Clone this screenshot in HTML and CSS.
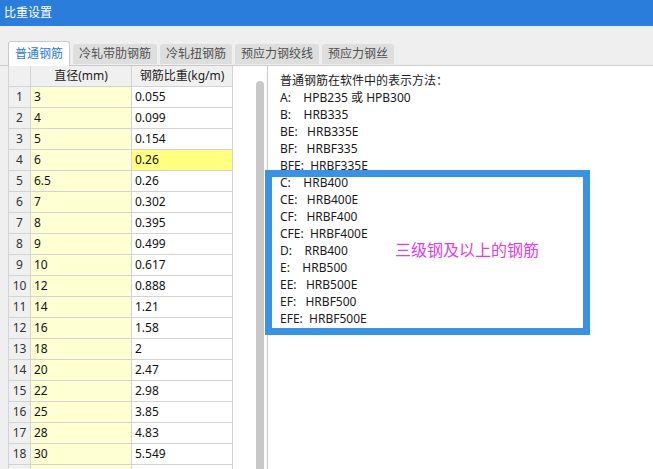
FILE: index.html
```html
<!DOCTYPE html>
<html lang="zh-CN">
<head>
<meta charset="utf-8">
<title>比重设置</title>
<link rel="stylesheet" href="styles.css">
</head>
<body>
<div class="window">
  <div class="titlebar">比重设置</div>
  <div class="tabbar">
    <div class="tab active">普通钢筋</div>
    <div class="tab">冷轧带肋钢筋</div>
    <div class="tab">冷轧扭钢筋</div>
    <div class="tab">预应力钢绞线</div>
    <div class="tab">预应力钢丝</div>
  </div>
  <div class="panel">
    <div class="left">
      <div class="grid">
        <div class="row head"><div class="c0"></div><div class="c1">直径(mm)</div><div class="c2">钢筋比重(kg/m)</div></div>
        <div class="row"><div class="c0">1</div><div class="c1">3</div><div class="c2">0.055</div></div>
        <div class="row"><div class="c0">2</div><div class="c1">4</div><div class="c2">0.099</div></div>
        <div class="row"><div class="c0">3</div><div class="c1">5</div><div class="c2">0.154</div></div>
        <div class="row"><div class="c0">4</div><div class="c1">6</div><div class="c2 sel">0.26</div></div>
        <div class="row"><div class="c0">5</div><div class="c1">6.5</div><div class="c2">0.26</div></div>
        <div class="row"><div class="c0">6</div><div class="c1">7</div><div class="c2">0.302</div></div>
        <div class="row"><div class="c0">7</div><div class="c1">8</div><div class="c2">0.395</div></div>
        <div class="row"><div class="c0">8</div><div class="c1">9</div><div class="c2">0.499</div></div>
        <div class="row"><div class="c0">9</div><div class="c1">10</div><div class="c2">0.617</div></div>
        <div class="row"><div class="c0">10</div><div class="c1">12</div><div class="c2">0.888</div></div>
        <div class="row"><div class="c0">11</div><div class="c1">14</div><div class="c2">1.21</div></div>
        <div class="row"><div class="c0">12</div><div class="c1">16</div><div class="c2">1.58</div></div>
        <div class="row"><div class="c0">13</div><div class="c1">18</div><div class="c2">2</div></div>
        <div class="row"><div class="c0">14</div><div class="c1">20</div><div class="c2">2.47</div></div>
        <div class="row"><div class="c0">15</div><div class="c1">22</div><div class="c2">2.98</div></div>
        <div class="row"><div class="c0">16</div><div class="c1">25</div><div class="c2">3.85</div></div>
        <div class="row"><div class="c0">17</div><div class="c1">28</div><div class="c2">4.83</div></div>
        <div class="row"><div class="c0">18</div><div class="c1">30</div><div class="c2">5.549</div></div>
        <div class="row"><div class="c0"></div><div class="c1"></div><div class="c2"></div></div>
      </div>
      <div class="scrollbar"></div>
    </div>
    <div class="right">
      <div class="line">普通钢筋在软件中的表示方法：</div>
      <div class="line">A:    HPB235 或 HPB300</div>
      <div class="line">B:    HRB335</div>
      <div class="line">BE:   HRB335E</div>
      <div class="line">BF:   HRBF335</div>
      <div class="line">BFE:  HRBF335E</div>
      <div class="line">C:    HRB400</div>
      <div class="line">CE:   HRB400E</div>
      <div class="line">CF:   HRBF400</div>
      <div class="line">CFE:  HRBF400E</div>
      <div class="line">D:    RRB400</div>
      <div class="line">E:    HRB500</div>
      <div class="line">EE:   HRB500E</div>
      <div class="line">EF:   HRBF500</div>
      <div class="line">EFE:  HRBF500E</div>
    </div>
  </div>
  <div class="annot">
    <div class="annot-text">三级钢及以上的钢筋</div>
  </div>
</div>
</body>
</html>
```
FILE: styles.css
```css
html, body {
  margin: 0;
  padding: 0;
  width: 653px;
  height: 469px;
  overflow: hidden;
}
body {
  background: #efefef;
  font-family: "Noto Sans", "Noto Sans CJK SC", sans-serif;
  font-size: 12px;
  color: #1a1a1a;
}
.window {
  position: relative;
  width: 653px;
  height: 469px;
  display: flex;
  flex-direction: column;
  overflow: hidden;
}
.titlebar {
  height: 26px;
  line-height: 26px;
  background: #2b7ddb;
  color: #ffffff;
  padding-left: 4px;
  font-size: 12px;
  flex: none;
}
.tabbar {
  flex: none;
  height: 39px;
  border-bottom: 1px solid #c9c9c9;
  display: flex;
  align-items: flex-end;
  gap: 3px;
  padding-left: 8px;
}
.tab {
  height: 20px;
  line-height: 20px;
  padding: 0 6px;
  background: #dedede;
  color: #505050;
  border-radius: 3px 3px 0 0;
  margin-bottom: 1px;
  white-space: nowrap;
}
.tab.active {
  height: 24px;
  line-height: 24px;
  background: #ffffff;
  color: #2b7ad8;
  border: 1px solid #c9c9c9;
  border-bottom: none;
  margin-bottom: -1px;
  padding: 0 6px;
}
.panel {
  flex: 1;
  margin-left: 8px;
  display: flex;
  background: #ffffff;
  min-height: 0;
  overflow: hidden;
}
.left {
  width: 259px;
  flex: none;
  display: flex;
  border-right: 1px solid #c8c8c8;
}
.grid {
  width: 225px;
  border-left: 1px solid #d3d3d3;
  align-self: flex-start;
}
.row {
  display: grid;
  grid-template-columns: 22px 101px 101px;
  height: 21px;
}
.row > div {
  border-right: 1px solid #d3d3d3;
  border-bottom: 1px solid #d3d3d3;
  line-height: 20px;
  white-space: nowrap;
  overflow: hidden;
  color: #111111;
}
.row .c0 {
  background: #f0f0f0;
  text-align: center;
  color: #333333;
}
.row .c1 {
  background: #ffffd4;
  padding-left: 3px;
}
.row .c2 {
  background: #ffffff;
  padding-left: 3px;
}
.row .c2.sel {
  background: #ffff80;
}
.row.head > div {
  background: #f0f0f0;
  text-align: center;
  padding-left: 0;
  color: #222222;
}
.scrollbar {
  width: 8px;
  margin-left: auto;
  margin-right: 3px;
  margin-top: 15px;
  background: #c8c8c8;
  border-radius: 4px 4px 0 0;
}
.right {
  flex: 1;
  padding: 6px 0 0 12px;
}
.line {
  height: 17px;
  line-height: 17px;
  white-space: pre;
  color: #1a1a1a;
}
.annot {
  position: absolute;
  left: 265px;
  top: 170px;
  width: 311px;
  height: 151px;
  border: 7px solid #3a93e2;
}
.annot-text {
  position: absolute;
  left: 123px;
  top: 65px;
  font-size: 16px;
  line-height: 16px;
  color: #e23ce6;
  white-space: nowrap;
}
```
